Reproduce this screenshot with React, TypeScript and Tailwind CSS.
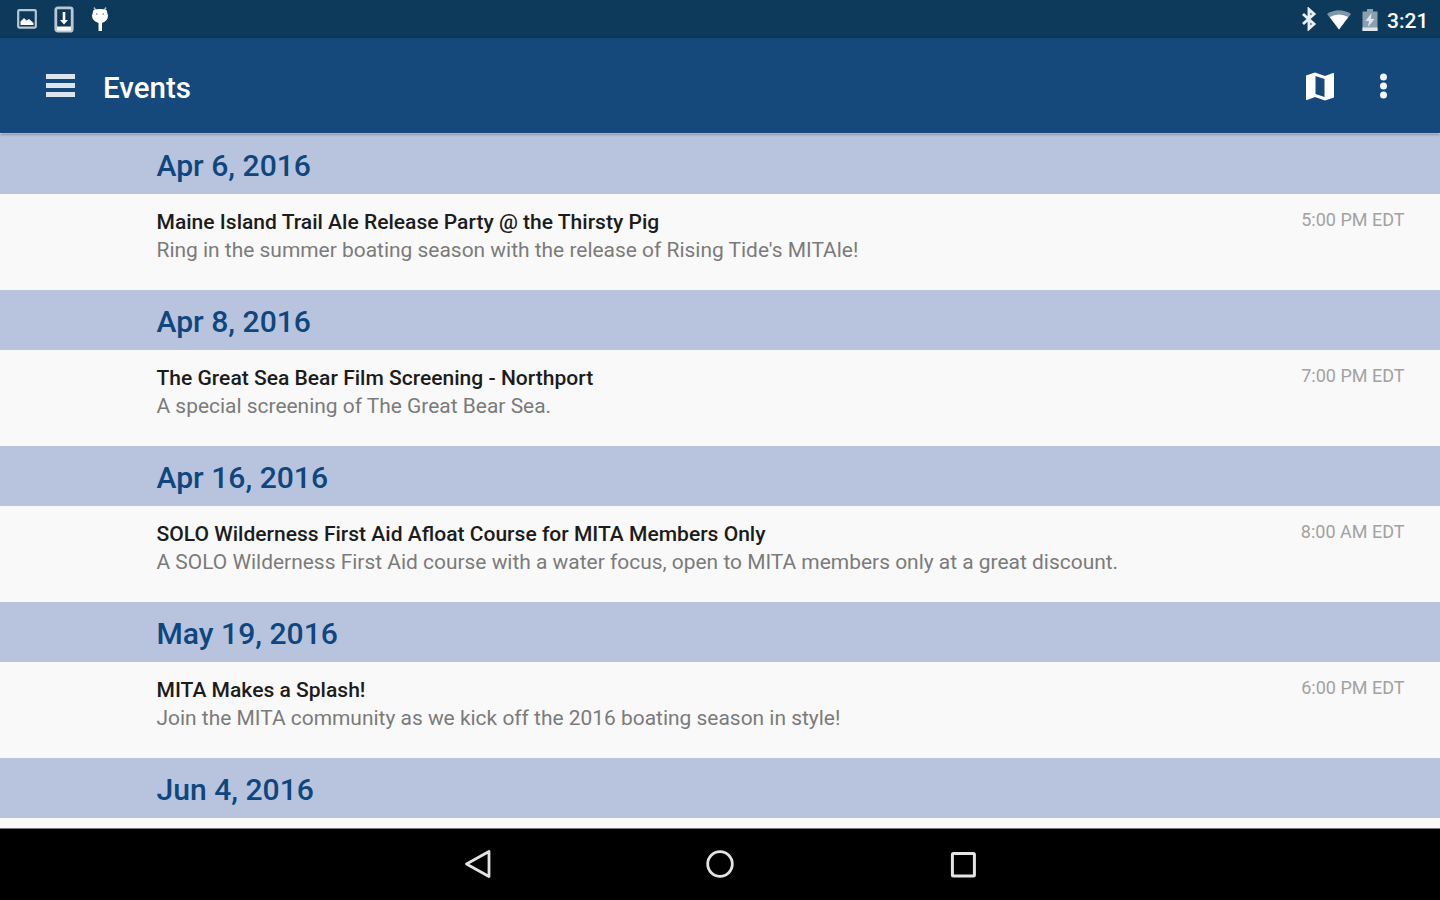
type Event = {
  date: string;
  title: string;
  description: string;
  time: string;
};

const events: Event[] = [
  {
    date: "Apr 6, 2016",
    title: "Maine Island Trail Ale Release Party @ the Thirsty Pig",
    description:
      "Ring in the summer boating season with the release of Rising Tide's MITAle!",
    time: "5:00 PM EDT",
  },
  {
    date: "Apr 8, 2016",
    title: "The Great Sea Bear Film Screening - Northport",
    description: "A special screening of The Great Bear Sea.",
    time: "7:00 PM EDT",
  },
  {
    date: "Apr 16, 2016",
    title: "SOLO Wilderness First Aid Afloat Course for MITA Members Only",
    description:
      "A SOLO Wilderness First Aid course with a water focus, open to MITA members only at a great discount.",
    time: "8:00 AM EDT",
  },
  {
    date: "May 19, 2016",
    title: "MITA Makes a Splash!",
    description:
      "Join the MITA community as we kick off the 2016 boating season in style!",
    time: "6:00 PM EDT",
  },
];

function StatusBar() {
  return (
    <div className="flex h-[38px] shrink-0 items-center justify-between bg-[#0d395b] pr-[11px] pl-[17px] text-white">
      <div className="flex items-center">
        <svg className="h-5 w-5" viewBox="0 0 20 20">
          <rect x="1.200" y="1.200" width="17.600" height="17.400" rx="1" fill="none" stroke="#b9c7d3" strokeWidth="2.200" />
          <path d="M3.500 16v-3.500l3.500-3.500 2.500 2.500 2.500-1.500 4.500 4V16z" fill="#fff" />
        </svg>
        <svg className="ml-[17px] h-[27px] w-5" viewBox="0 0 20 27">
          <rect x="1.800" y="1.800" width="16.400" height="23.400" rx="2" fill="none" stroke="#b9c7d3" strokeWidth="2.800" />
          <path d="M3 20.500h14v4H3zM8.700 6h2.600v8H14l-4 4.500L6 14h2.700z" fill="#fff" />
        </svg>
        <svg className="ml-4 h-[26px] w-5" viewBox="0 0 20 26">
          <path d="M4 1.500l2 3M16 1.500l-2 3" stroke="#a9bac7" strokeWidth="1.400" />
          <path d="M3.500 4Q10 2 16.500 4L18 9.500Q18 15 12 17v8H8.500v-8Q2 15 2 9.500z" fill="#fff" />
          <circle cx="6.800" cy="8" r=".9" fill="#8fa5b5" />
          <circle cx="13.200" cy="8" r=".9" fill="#8fa5b5" />
        </svg>
      </div>
      <div className="flex items-center">
        <svg className="h-[24px] w-4" viewBox="0 0 16 24">
          <path d="M2 7l11 10-5 4.500v-19L13 7 2 17" fill="none" stroke="#e8edf1" strokeWidth="2.900" />
        </svg>
        <svg className="mt-px ml-[10px] h-5 w-6" viewBox="0 0 24 20">
          <path d="M0 4Q12-3.500 24 4L12 19.500z" fill="#7f97a8" />
          <path d="M2.800 7Q12 2 21.200 7L12 19.500z" fill="#fff" />
        </svg>
        <svg className="mt-px ml-[11px] h-6 w-4" viewBox="0 0 16 24">
          <path d="M5 1h6v2.500h4.500V23H.5V3.500H5z" fill="#8ba0af" />
          <path d="M.5 19.500h15V23H.5zM9.500 5L3.500 13H7l-1 6 6.500-8H9z" fill="#dfe6eb" />
        </svg>
        <span className="ml-[9px] w-[42px] pt-[4px] text-[21px] leading-none font-medium whitespace-nowrap">
          3:21
        </span>
      </div>
    </div>
  );
}

function Toolbar() {
  return (
    <header className="relative z-10 flex h-[95px] shrink-0 items-center bg-[#15497c] pr-[52px] pl-[46px] shadow-[0_1px_3px_rgba(0,0,0,0.45)]">
      <button className="flex flex-col gap-[4px]">
        <span className="h-[5px] w-[29px] bg-[#dce4ef]" />
        <span className="h-[5px] w-[29px] bg-[#dce4ef]" />
        <span className="h-[5px] w-[29px] bg-[#dce4ef]" />
      </button>
      <h1 className="ml-[28px] pt-[7px] text-[29.500px] leading-none font-medium text-white">
        Events
      </h1>
      <button className="ml-auto pt-px">
        <svg className="h-[29px] w-[30px]" viewBox="0 0 30 29">
          <path
            fillRule="evenodd"
            d="M1 3.500L10 .5l10 3.500L28 1q1-.3 1 .8v23.700l-9 3L10 25l-8 3q-1 .3-1-.8zM10.500 4v18l9 3V7z"
            fill="#fff"
          />
        </svg>
      </button>
      <button className="ml-[44px]">
        <svg className="h-[26px] w-[9px]" viewBox="0 0 9 26">
          <circle cx="4.500" cy="4" r="3.500" fill="#f1f5f9" />
          <circle cx="4.500" cy="13" r="3.500" fill="#f1f5f9" />
          <circle cx="4.500" cy="22" r="3.500" fill="#f1f5f9" />
        </svg>
      </button>
    </header>
  );
}

function DateHeader({ date }: { date: string }) {
  return (
    <h2 className="flex h-[60px] shrink-0 items-center bg-[#b8c4de] pt-[4px] pl-[156.500px] text-[30.100px] font-medium text-[#0f467e]">
      {date}
    </h2>
  );
}

export default function App() {
  return (
    <div className="flex h-[900px] w-[1440px] flex-col overflow-hidden bg-[#f9f9f9] font-['Roboto',sans-serif]">
      <StatusBar />
      <Toolbar />
      <main className="flex h-[696px] shrink-0 flex-col overflow-hidden border-b border-[#777] pt-px">
        {events.map((event) => (
          <section key={event.date}>
            <DateHeader date={event.date} />
            <div className="flex h-24 items-start justify-between pt-[13px] pr-[35.500px] pl-[156.500px] whitespace-nowrap">
              <div>
                <h3 className="text-[21.050px] leading-[30px] font-medium text-[#1c1c1c]">
                  {event.title}
                </h3>
                <p className="text-[20.950px] leading-[26px] text-[#7b7b7b]">
                  {event.description}
                </p>
              </div>
              <span className="text-[18px] leading-[25px] text-[#a2a2a2]">
                {event.time}
              </span>
            </div>
          </section>
        ))}
        <DateHeader date="Jun 4, 2016" />
      </main>
      <nav className="flex flex-1 items-center bg-black pb-px pl-[464px]">
        <svg className="h-[30px] w-7" viewBox="0 0 28 30">
          <path d="M2.500 15L25 2.500v25z" fill="none" stroke="#e4e4e4" strokeWidth="2.800" strokeLinejoin="round" />
        </svg>
        <svg className="ml-[214px] h-[30px] w-7" viewBox="0 0 28 30">
          <circle cx="14" cy="15" r="12.300" fill="none" stroke="#e4e4e4" strokeWidth="2.800" />
        </svg>
        <svg className="ml-[215px] h-[30px] w-7" viewBox="0 0 28 30">
          <rect x="3.400" y="4.400" width="22" height="22.500" rx="1" fill="none" stroke="#e4e4e4" strokeWidth="3" />
        </svg>
      </nav>
    </div>
  );
}
